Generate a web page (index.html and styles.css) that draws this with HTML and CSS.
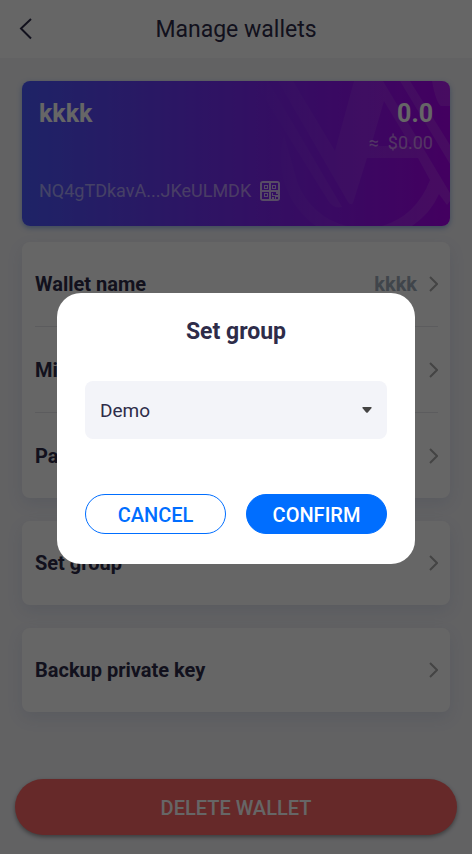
FILE: index.html
```html
<!DOCTYPE html>
<html lang="en">
<head>
<meta charset="utf-8">
<meta name="viewport" content="width=device-width, initial-scale=1">
<title>Manage wallets</title>
<link rel="stylesheet" href="styles.css">
</head>
<body>
<div class="page">
  <header class="topbar">
    <button class="back" type="button" aria-label="Back">
      <svg width="14" height="22" viewBox="0 0 14 22" fill="none" stroke="currentColor" stroke-width="2"><path d="M12 1 2 10.500l10 10"/></svg>
    </button>
    <h1 class="title">Manage wallets</h1>
  </header>
  <main class="content">
    <section class="wallet">
      <svg class="mark" viewBox="0 0 428 145" preserveAspectRatio="xMaxYMid slice" aria-hidden="true">
        <defs>
          <linearGradient id="fade" gradientUnits="userSpaceOnUse" x1="235" y1="0" x2="428" y2="0">
            <stop offset="0" stop-color="#fff" stop-opacity="0"/>
            <stop offset=".5" stop-color="#fff" stop-opacity=".07"/>
            <stop offset="1" stop-color="#fff" stop-opacity=".12"/>
          </linearGradient>
        </defs>
        <g fill="url(#fade)">
          <path d="M232 0h14l74 126q-8 2-13-5z"/>
          <path d="M256 0h15l42 70L332 0h29l67 112v8l-3 4-8-11Q409 132 390 145h-30q34-10 48-46l-12-22h-51l-14 45q-2 3-5-1zM362 20l-13 45h40z"/>
          <path d="M378 0h10l40 64v19zM410 0h18v25h-9q-5-3-9-25z"/>
          <path d="M262 54a83 83 0 0 0 32 91h31a70 70 0 0 1-50-45z"/>
        </g>
      </svg>
      <div class="wallet-top">
        <strong class="wallet-name">kkkk</strong>
        <div class="balance"><strong class="amount">0.0</strong><span class="fiat">≈&nbsp; $0.00</span></div>
      </div>
      <div class="address">
        <span>NQ4gTDkavA...JKeULMDK</span>
        <svg class="qr" width="20" height="20" viewBox="0 0 20 20" fill="currentColor" fill-rule="evenodd"><path d="M3 0h14q3 0 3 3v14q0 3-3 3H3q-3 0-3-3V3q0-3 3-3zM2 2v7h7V2zM11 2v7h7V2zM2 11v7h7v-7zM11 11v7h7v-7z"/><path d="M4 4h4v4H4zM5 5v2h2V5zM12 4h4v4h-4zM13 5v2h2V5zM4 12h4v4H4zM5 13v2h2v-2zM12 12h1v2h2v1h-3zM16 11h2v2h-2zM15 14h3v2h-2v2h-1zM12 16h2v2h-2z"/></svg>
      </div>
    </section>
    <nav class="group">
      <a class="row" href="#name"><span>Wallet name</span><span class="value">kkkk</span><svg class="chev" viewBox="0 0 9 16"><path d="m1 1 7 7-7 7"/></svg></a>
      <a class="row" href="#mining"><span>Mining</span><svg class="chev" viewBox="0 0 9 16"><path d="m1 1 7 7-7 7"/></svg></a>
      <a class="row" href="#password"><span>Password</span><svg class="chev" viewBox="0 0 9 16"><path d="m1 1 7 7-7 7"/></svg></a>
    </nav>
    <nav class="group">
      <a class="row" href="#group"><span>Set group</span><svg class="chev" viewBox="0 0 9 16"><path d="m1 1 7 7-7 7"/></svg></a>
    </nav>
    <nav class="group">
      <a class="row" href="#backup"><span>Backup private key</span><svg class="chev" viewBox="0 0 9 16"><path d="m1 1 7 7-7 7"/></svg></a>
    </nav>
  </main>
  <footer class="footer"><button class="delete" type="button">DELETE WALLET</button></footer>
</div>
<div class="overlay">
  <form class="dialog" role="dialog" aria-labelledby="dialog-title">
    <h2 class="dialog-title" id="dialog-title">Set group</h2>
    <div class="picker">
      <select class="select" aria-label="Group"><option>Demo</option></select>
      <svg class="caret" width="10" height="6" viewBox="0 0 10 6" aria-hidden="true"><path d="M1 0h8q1 0 .6.900L6 5.300q-1 1-2 0L.4.900Q0 0 1 0z"/></svg>
    </div>
    <div class="actions">
      <button class="btn" type="button">CANCEL</button>
      <button class="btn primary" type="button">CONFIRM</button>
    </div>
  </form>
</div>
</body>
</html>
```
FILE: styles.css
```css
* { box-sizing: border-box; }
body { margin: 0; font-family: Roboto, sans-serif; color: #2e2c49; background: #f4f4f8; }
button, select { font: inherit; color: inherit; }
.page { min-height: 100vh; display: flex; flex-direction: column; }
.topbar { height: 58px; background: #fff; display: grid; grid-template-columns: 52px 1fr 52px; align-items: center; }
.back { height: 56px; padding: 0 0 0 19px; border: 0; background: none; display: flex; align-items: center; }
.title { margin: 0; padding-top: 2px; font-size: 23px; line-height: 28px; font-weight: 400; text-align: center; }
.content { flex: 1; padding: 23px 22px; display: flex; flex-direction: column; }
.wallet { position: relative; overflow: hidden; height: 145px; margin-bottom: 16px; padding: 18px 17px 24px; border-radius: 8px; color: #fff; background: linear-gradient(90deg, #4c58ff, #a800f0); display: flex; flex-direction: column; justify-content: space-between; box-shadow: 0 2px 5px rgba(60, 120, 220, .5); }
.mark { position: absolute; inset: 0; width: 100%; height: 100%; }
.wallet-top { display: flex; justify-content: space-between; position: relative; }
.wallet-name, .amount { font-size: 25px; line-height: 30px; font-weight: 700; }
.balance { display: flex; flex-direction: column; align-items: flex-end; }
.fiat { font-size: 18px; line-height: 28px; opacity: .5; }
.address { position: relative; display: flex; align-items: center; gap: 9px; font-size: 18px; line-height: 22px; color: rgba(255, 255, 255, .5); }
.qr { color: rgba(255, 255, 255, .7); }
.group { margin-bottom: 23px; padding: 0 12px 0 13px; border-radius: 8px; background: #fff; box-shadow: 0 6px 16px rgba(70, 110, 170, .12); }
.row { height: 84px; display: flex; align-items: center; color: inherit; text-decoration: none; font-size: 20px; line-height: 24px; font-weight: 700; }
.row + .row { height: 86px; border-top: 1px solid #e6e6ea; }
.row > span:first-child { flex: 1; }
.value { color: #a0adbb; margin-right: 12px; }
.chev { width: 9px; height: 16px; fill: none; stroke: #aaa; stroke-width: 2; }
.footer { padding: 0 15px 19px; }
.delete { width: 100%; height: 56px; padding: 2px 0 0; border: 0; border-radius: 28px; background: #ff6666; color: #fff; font-size: 20px; font-weight: 500; box-shadow: 0 2px 4px rgba(0, 0, 0, .4); }
.overlay { position: fixed; inset: 0; display: flex; align-items: center; justify-content: center; padding: 2px 57px 0; background: rgba(0, 0, 0, .6); }
.dialog { width: 100%; padding: 25px 28px 30px; border-radius: 24px; background: #fff; }
.dialog-title { margin: 0 0 35px; font-size: 23px; line-height: 28px; font-weight: 700; text-align: center; }
.picker { position: relative; }
.select { width: 100%; height: 58px; padding: 2px 15px 0; border: 0; border-radius: 8px; background: #f3f4f9; appearance: none; font-size: 19px; }
.caret { position: absolute; right: 15px; top: 26px; fill: #444; pointer-events: none; }
.actions { margin-top: 55px; display: grid; grid-template-columns: 1fr 1fr; gap: 20px; }
.btn { height: 40px; padding: 2px 0 0; border: 1px solid #006eff; border-radius: 20px; background: #fff; color: #006eff; font-size: 20px; font-weight: 500; }
.primary { background: #006eff; color: #fff; }
```
